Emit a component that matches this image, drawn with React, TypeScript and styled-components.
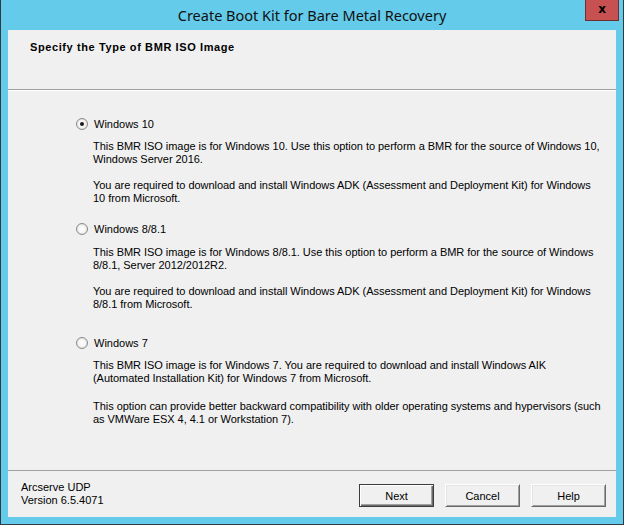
import React from "react";
import styled, { createGlobalStyle } from "styled-components";

const Global = createGlobalStyle`
  html, body { margin: 0; padding: 0; background: #ffffff; }
  #root { width: 624px; height: 525px; }
`;

const Frame = styled.div`
  box-sizing: border-box;
  width: 624px;
  height: 525px;
  background: #64cbea;
  border: 1px solid #2e3b40;
  border-top: none;
  display: flex;
  flex-direction: column;
  font-family: "Liberation Sans", Arial, sans-serif;
`;

const TitleBar = styled.div`
  position: relative;
  height: 30px;
  flex: none;
  display: flex;
  justify-content: center;
  align-items: flex-start;
`;

const Title = styled.div`
  font-family: "Noto Sans", "Open Sans", sans-serif;
  font-size: 14.5px;
  line-height: 20px;
  margin-top: 5px;
  color: #111;
`;

const CloseButton = styled.div`
  position: absolute;
  top: 0;
  right: 4px;
  box-sizing: border-box;
  width: 34px;
  height: 21px;
  background: #c75050;
  border: 1px solid #6b3030;
  border-top: none;
  display: flex;
  align-items: center;
  justify-content: center;
  font-family: "DejaVu Sans", sans-serif;
  font-weight: bold;
  font-size: 12px;
  color: #000;
  padding-bottom: 2px;
`;

const Client = styled.div`
  flex: 1;
  margin: 0 7px 7px 7px;
  background: #f0f0f0;
  display: flex;
  flex-direction: column;
  color: #000;
`;

const Header = styled.div`
  height: 59px;
  flex: none;
  border-bottom: 1px solid #a0a0a0;
  box-shadow: 0 1px 0 #ffffff;
  box-sizing: content-box;
  padding-left: 22px;
`;

const HeaderText = styled.div`
  font-weight: bold;
  font-size: 11px;
  line-height: 13px;
  letter-spacing: 0.6px;
  margin-top: 11px;
`;

const Main = styled.div`
  flex: 1;
  padding: 27px 0 0 68px;
  display: flex;
  flex-direction: column;
`;

const Option = styled.div<{ $top: number }>`
  display: flex;
  flex-direction: column;
  margin-top: ${(p) => p.$top}px;
`;

const OptionRow = styled.label`
  display: flex;
  align-items: center;
  height: 13px;
  font-size: 11px;
  gap: 6px;
`;

const Radio = styled.span<{ $checked?: boolean }>`
  box-sizing: border-box;
  width: 12px;
  height: 12px;
  border-radius: 50%;
  border: 1px solid #8a8a8a;
  background: radial-gradient(circle at 50% 50%, #ffffff 0%, #f4f4f4 55%, #d8d8d8 100%);
  box-shadow: inset 0 0 0 1px #e6e6e6;
  display: flex;
  align-items: center;
  justify-content: center;
  &::after {
    content: "";
    width: 4px;
    height: 4px;
    border-radius: 50%;
    background: ${(p) => (p.$checked ? "#1a1a1a" : "transparent")};
  }
`;

const Desc = styled.div<{ $top: number }>`
  margin-left: 17px;
  margin-top: ${(p) => p.$top}px;
  font-size: 11px;
  line-height: 13px;
  letter-spacing: -0.04px;
  white-space: nowrap;
`;

const Para = styled.p<{ $gap?: number }>`
  margin: ${(p) => p.$gap ?? 0}px 0 0 0;
`;

const Footer = styled.div`
  height: 46px;
  flex: none;
  border-top: 1px solid #a0a0a0;
  display: flex;
  justify-content: space-between;
  align-items: flex-start;
  padding: 0 10px 0 13px;
`;

const Version = styled.div`
  font-size: 11px;
  line-height: 13px;
  margin-top: 10px;
`;

const Buttons = styled.div`
  display: flex;
  gap: 11px;
  margin-top: 13px;
`;

const Button = styled.button<{ $default?: boolean }>`
  box-sizing: border-box;
  width: 75px;
  height: 23px;
  padding: 0;
  font-family: "Liberation Sans", Arial, sans-serif;
  font-size: 11px;
  color: #000;
  background: #f0f0f0;
  border: 1px solid;
  border-color: ${(p) => (p.$default ? "#3c3c3c" : "#ffffff #6a6a6a #6a6a6a #ffffff")};
  box-shadow: ${(p) =>
    p.$default
      ? "inset 1px 1px 0 #ffffff, inset -1px -1px 0 #6a6a6a, inset -2px -2px 0 #a0a0a0"
      : "inset 1px 1px 0 #e4e4e4, inset -1px -1px 0 #a0a0a0"};
`;

const options = [
  {
    label: "Windows 10",
    checked: true,
    top: 0,
    descTop: 10,
    gap: 13,
    paras: [
      ["This BMR ISO image is for Windows 10. Use this option to perform a BMR for the source of Windows 10,", "Windows Server 2016."],
      ["You are required to download and install Windows ADK (Assessment and Deployment Kit) for Windows", "10 from Microsoft."],
    ],
  },
  {
    label: "Windows 8/8.1",
    checked: false,
    top: 17,
    descTop: 11,
    gap: 13,
    paras: [
      ["This BMR ISO image is for Windows 8/8.1. Use this option to perform a BMR for the source of Windows", "8/8.1, Server 2012/2012R2."],
      ["You are required to download and install Windows ADK (Assessment and Deployment Kit) for Windows", "8/8.1 from Microsoft."],
    ],
  },
  {
    label: "Windows 7",
    checked: false,
    top: 25,
    descTop: 10,
    gap: 15,
    paras: [
      ["This BMR ISO image is for Windows 7. You are required to download and install Windows AIK", "(Automated Installation Kit) for Windows 7 from Microsoft."],
      ["This option can provide better backward compatibility with older operating systems and hypervisors (such", "as VMWare ESX 4, 4.1 or Workstation 7)."],
    ],
  },
];

export default function App() {
  return (
    <>
      <Global />
      <Frame>
        <TitleBar>
          <Title>Create Boot Kit for Bare Metal Recovery</Title>
          <CloseButton>x</CloseButton>
        </TitleBar>
        <Client>
          <Header>
            <HeaderText>Specify the Type of BMR ISO Image</HeaderText>
          </Header>
          <Main>
            {options.map((o) => (
              <Option key={o.label} $top={o.top}>
                <OptionRow>
                  <Radio $checked={o.checked} />
                  {o.label}
                </OptionRow>
                <Desc $top={o.descTop}>
                  {o.paras.map((lines, i) => (
                    <Para key={i} $gap={i === 0 ? 0 : o.gap}>
                      {lines[0]}
                      <br />
                      {lines[1]}
                    </Para>
                  ))}
                </Desc>
              </Option>
            ))}
          </Main>
          <Footer>
            <Version>
              Arcserve UDP
              <br />
              Version 6.5.4071
            </Version>
            <Buttons>
              <Button $default>Next</Button>
              <Button>Cancel</Button>
              <Button>Help</Button>
            </Buttons>
          </Footer>
        </Client>
      </Frame>
    </>
  );
}
